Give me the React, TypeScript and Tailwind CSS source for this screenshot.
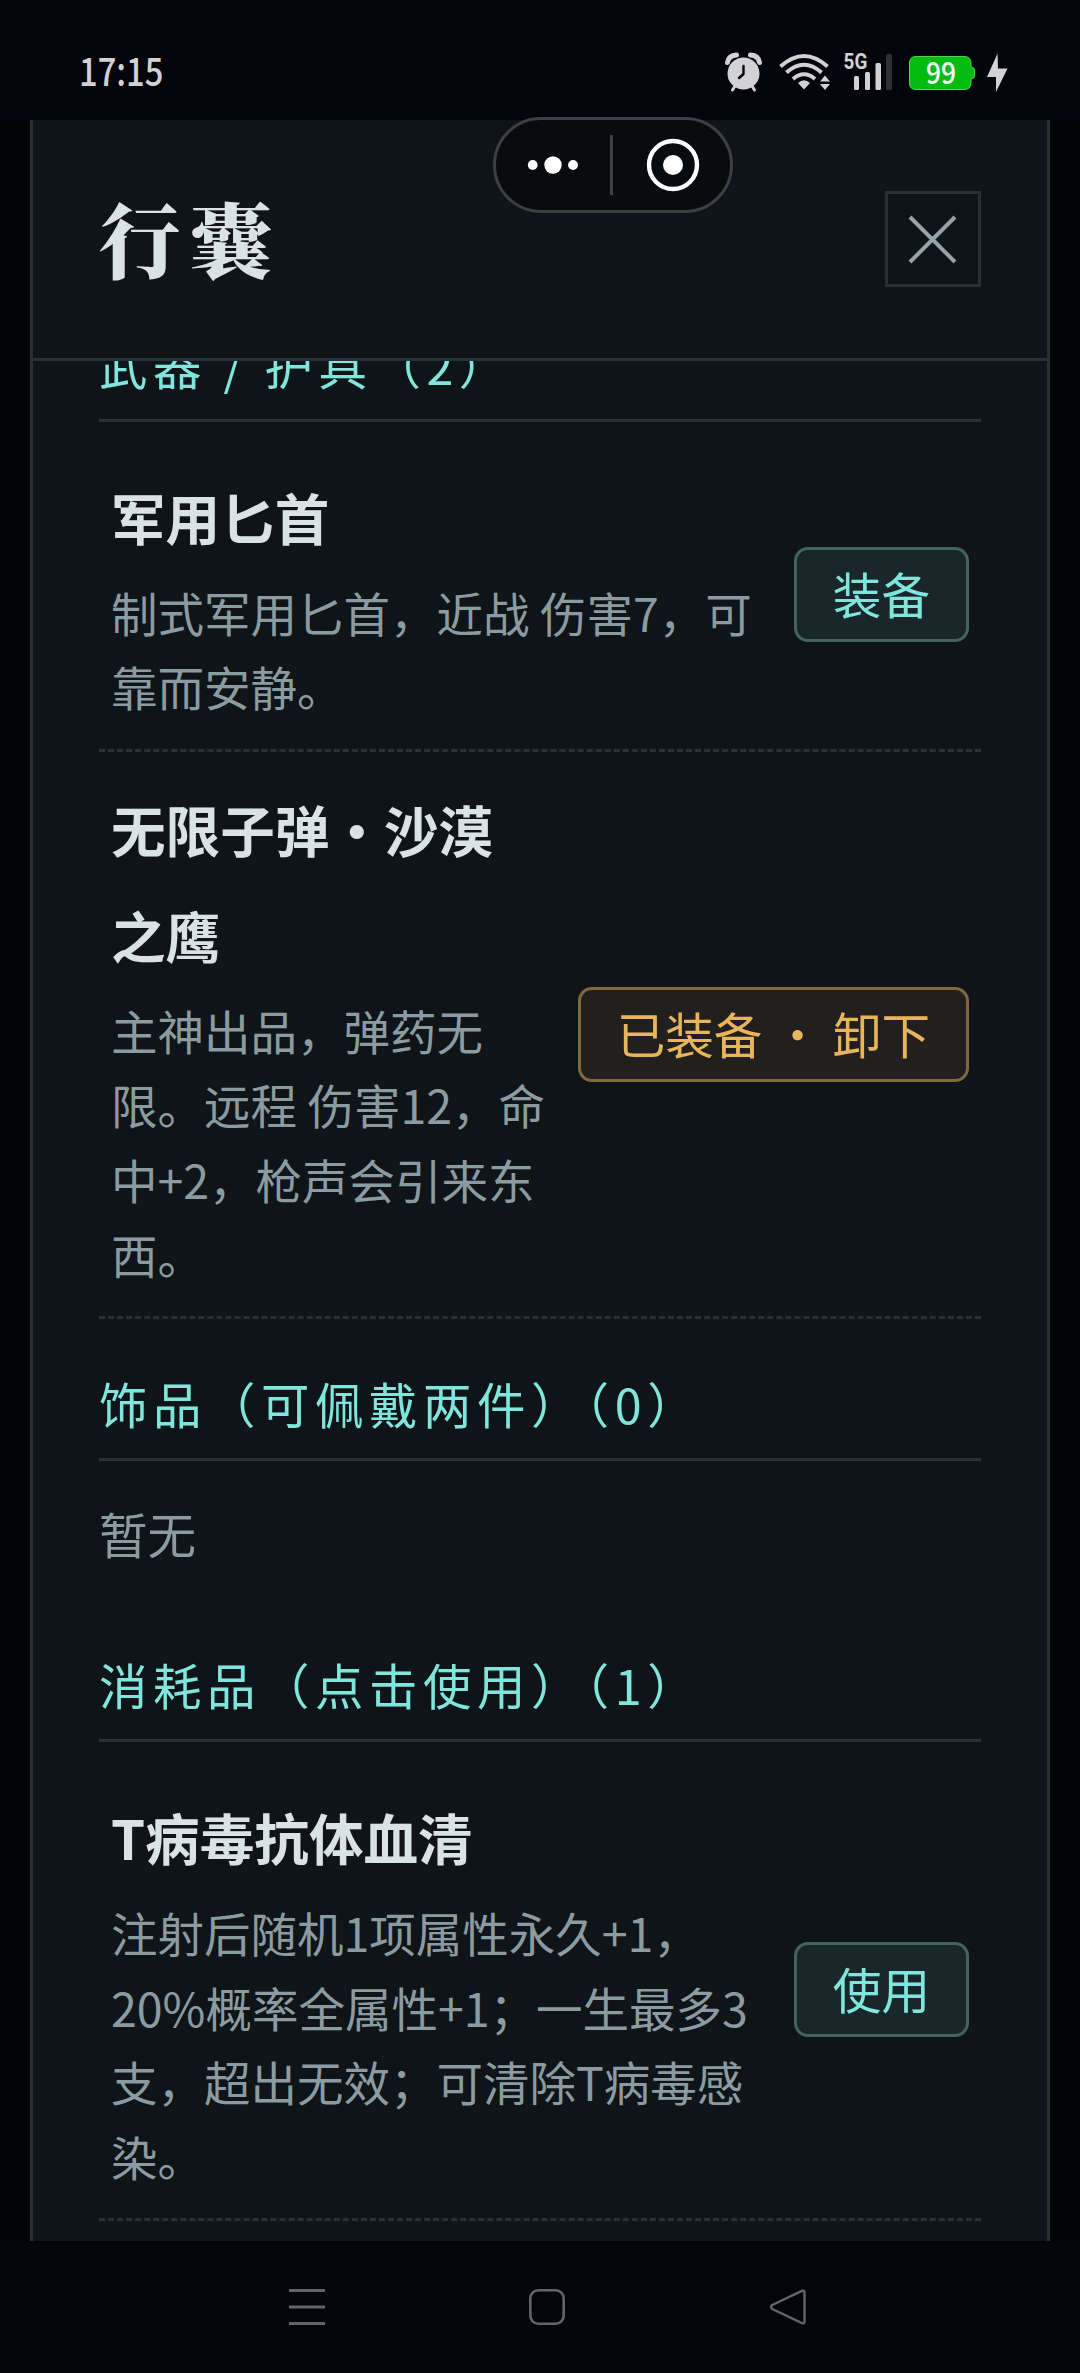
import React from "react";

type Tone = "teal" | "amber";

interface Item {
  name: string;
  desc: string;
  action: string;
  tone: Tone;
}

const weapons: Item[] = [
  { name: "军用匕首", desc: "制式军用匕首，近战 伤害7，可\n靠而安静。", action: "装备", tone: "teal" },
  {
    name: "无限子弹・沙漠\n之鹰",
    desc: "主神出品，弹药无\n限。远程 伤害12，命\n中+2，枪声会引来东\n西。",
    action: "已装备 ・ 卸下",
    tone: "amber",
  },
];

const consumables: Item[] = [
  {
    name: "T病毒抗体血清",
    desc: "注射后随机1项属性永久+1，\n20%概率全属性+1；一生最多3\n支，超出无效；可清除T病毒感\n染。",
    action: "使用",
    tone: "teal",
  },
];

const toneClass: Record<Tone, string> = {
  teal: "border-[#426361] bg-[#19262a] text-[#80e5dc]",
  amber: "border-[#81693c] bg-[#21201e] text-[#e9b55b]",
};

function StatusBar() {
  return (
    <div className="flex h-[120px] shrink-0 items-start justify-between bg-[#04050a] pl-[79px] pr-[72px] pt-[48px] text-[#d2d1d6]">
      <div className="-mt-[3px] h-[48px] origin-left scale-x-[0.84] font-['Noto_Sans_CJK_SC'] text-[39px] font-medium leading-[48px]">17:15</div>
      <svg className="h-[48px] w-[284px]" viewBox="724 48 284 48" fill="currentColor">
        {/* alarm */}
        <circle cx="743.5" cy="73.5" r="16" />
        <path d="M726 61 Q727 54 735 53.5" stroke="currentColor" strokeWidth="5" strokeLinecap="round" fill="none" transform="translate(1.5 1.5)" />
        <path d="M761 61 Q760 54 752 53.5" stroke="currentColor" strokeWidth="5" strokeLinecap="round" fill="none" transform="translate(-1.5 1.5)" />
        <path d="M735 86 L732.5 90 M752 86 L754.5 90" stroke="currentColor" strokeWidth="3" strokeLinecap="round" />
        <path d="M743.5 66 V74 L739 78" stroke="#04050a" strokeWidth="2.4" strokeLinecap="round" strokeLinejoin="round" fill="none" />
        {/* wifi */}
        <g stroke="currentColor" strokeWidth="4" fill="none">
          <path d="M780.5 66.5 Q804 45.500 827.500 66.5" />
          <path d="M786.500 72.500 Q804 57 821.500 72.500" />
          <path d="M793 79 Q804 69.500 815 79" />
        </g>
        <path d="M798 83 Q804 77.500 810 83 L804 89.500 Z" />
        <path d="M820 81.500 L825 75.500 L830 81.500 Z M820 84 L830 84 L825 90 Z" />
        {/* signal */}
        <g transform="translate(843.600 69) scale(0.86 1)">
          <text x="0" y="0" fontSize="22" fontWeight="700" fontFamily="Roboto">5G</text>
        </g>
        <rect x="854" y="76" width="5" height="14" rx="1.500" />
        <rect x="865" y="72" width="5" height="18" rx="1.500" />
        <rect x="875.500" y="63" width="5.500" height="27" rx="1.500" />
        <rect x="886" y="54" width="6" height="36" rx="1.500" fill="#2e2f34" />
        {/* battery */}
        <path d="M916 56.500 H964 Q971 56.500 971 63 V67 Q974.500 67.500 974.500 70 V76 Q974.500 78.500 971 79 V83 Q971 89.500 964 89.500 H916 Q909.500 89.500 909.500 83 V63 Q909.500 56.500 916 56.500 Z" fill="#02bd10" stroke="#4fd258" strokeWidth="1" />
        <text x="926" y="83.500" fontSize="30" fontWeight="500" fontFamily="Noto Sans CJK SC" fill="#fff" textLength="30" lengthAdjust="spacingAndGlyphs">99</text>
        <path d="M997.500 53.500 L987 77 H996 V92 L1007.500 68.500 H998 Z" />
      </svg>
    </div>
  );
}

function Capsule() {
  return (
    <div className="absolute left-[493px] top-[117px] z-10 flex h-[96px] w-[240px] items-center justify-center rounded-full border-[3px] border-[#3d4043] bg-[#080c0f]">
      <svg className="h-[60px] w-[180px]" viewBox="523 135 180 60" fill="#fff">
        <circle cx="532.700" cy="165" r="4.900" />
        <circle cx="553" cy="165" r="8.700" />
        <circle cx="573" cy="165" r="4.900" />
        <rect x="610" y="135" width="3" height="60" fill="#3d4043" />
        <circle cx="673" cy="165" r="24" fill="none" stroke="#fff" strokeWidth="4.400" />
        <circle cx="673" cy="165" r="10" />
      </svg>
    </div>
  );
}

function SectionTitle({ children, className = "mt-[39px]" }: { children: React.ReactNode; className?: string }) {
  return (
    <h2 className={`${className} h-[103px] whitespace-pre border-b-[3px] border-[#263038] text-[48.4px] font-normal leading-[90px] tracking-[5.6px] text-[#80e5dc]`}>
      {children}
    </h2>
  );
}

function ItemRow({ item }: { item: Item }) {
  return (
    <li className="flex items-center justify-between border-b-[3px] border-dashed border-[#263038] px-[12px] py-[24px]">
      <div className="whitespace-pre pb-[1.2px]">
        <div className="text-[54.6px] font-bold leading-[106.2px] text-[#d9e3e5]">{item.name}</div>
        <div className="mt-[4.4px] text-[46.5px] leading-[74.6px] text-[#8a9ba2]">{item.desc}</div>
      </div>
      <button className={`h-[95px] shrink-0 whitespace-pre rounded-[14px] border-[3px] px-[36px] pb-[2px] text-[48.6px] leading-[86px] ${toneClass[item.tone]}`}>
        {item.action}
      </button>
    </li>
  );
}

function NavBar() {
  return (
    <nav className="flex h-[132px] shrink-0 items-center justify-center gap-[202.5px] bg-[#04050a] pl-[14px] text-[#636468]">
      <svg className="h-[38px] w-[38px]" viewBox="0 0 38 38" fill="none" stroke="currentColor" strokeWidth="3">
        <path d="M1 2.500 H37 M1 19 H37 M1 35.500 H37" />
      </svg>
      <svg className="h-[38px] w-[38px]" viewBox="0 0 38 38" fill="none" stroke="currentColor" strokeWidth="2.600">
        <rect x="2.300" y="2.300" width="33.400" height="33.400" rx="8" />
      </svg>
      <svg className="h-[38px] w-[38px]" viewBox="0 0 38 38" fill="none" stroke="currentColor" strokeWidth="2.400" strokeLinejoin="round">
        <path d="M33 2.800 L3.200 17 Q1 19 3.200 21 L33 35.200 Q35.500 36 35.500 33.500 V4.500 Q35.500 2 33 2.800 Z" />
      </svg>
    </nav>
  );
}

export default function App() {
  return (
    <div className="relative flex h-[2373px] w-[1080px] flex-col overflow-hidden bg-[#010405] font-['Noto_Sans_CJK_SC',sans-serif]">
      <StatusBar />
      <Capsule />
      <main className="mx-[30px] flex min-h-0 flex-1 flex-col border-x-[3px] border-[#263038] bg-[#0f1418]">
        <header className="flex h-[241px] shrink-0 items-center justify-between border-b-[3px] border-[#263038] px-[66px]">
          <h1 className="pb-[4px] font-['Noto_Serif_CJK_SC','Noto_Sans_CJK_SC',serif] text-[82px] font-black leading-[120px] tracking-[9px] text-[#d9e3e5]">行囊</h1>
          <button aria-label="关闭" className="flex h-[96px] w-[96px] items-center justify-center border-[3px] border-[#263038] text-[#95a3aa]">
            <svg className="h-[50px] w-[50px]" viewBox="0 0 50 50" stroke="currentColor" strokeWidth="4">
              <path d="M2 3 L47 48 M47 3 L2 48" />
            </svg>
          </button>
        </header>
        <div className="min-h-0 flex-1 overflow-hidden px-[66px]">
          <SectionTitle className="-mt-[42px]">武器 / 护具（2）</SectionTitle>
          <ul className="mt-[18px]">
            {weapons.map((item) => (
              <ItemRow key={item.name} item={item} />
            ))}
          </ul>
          <SectionTitle>饰品（可佩戴两件）（0）</SectionTitle>
          <p className="pb-[18px] pt-[24px] text-[48.6px] leading-[97px] text-[#8a9ba2]">暂无</p>
          <SectionTitle>消耗品（点击使用）（1）</SectionTitle>
          <ul className="mt-[18px]">
            {consumables.map((item) => (
              <ItemRow key={item.name} item={item} />
            ))}
          </ul>
        </div>
      </main>
      <NavBar />
    </div>
  );
}
